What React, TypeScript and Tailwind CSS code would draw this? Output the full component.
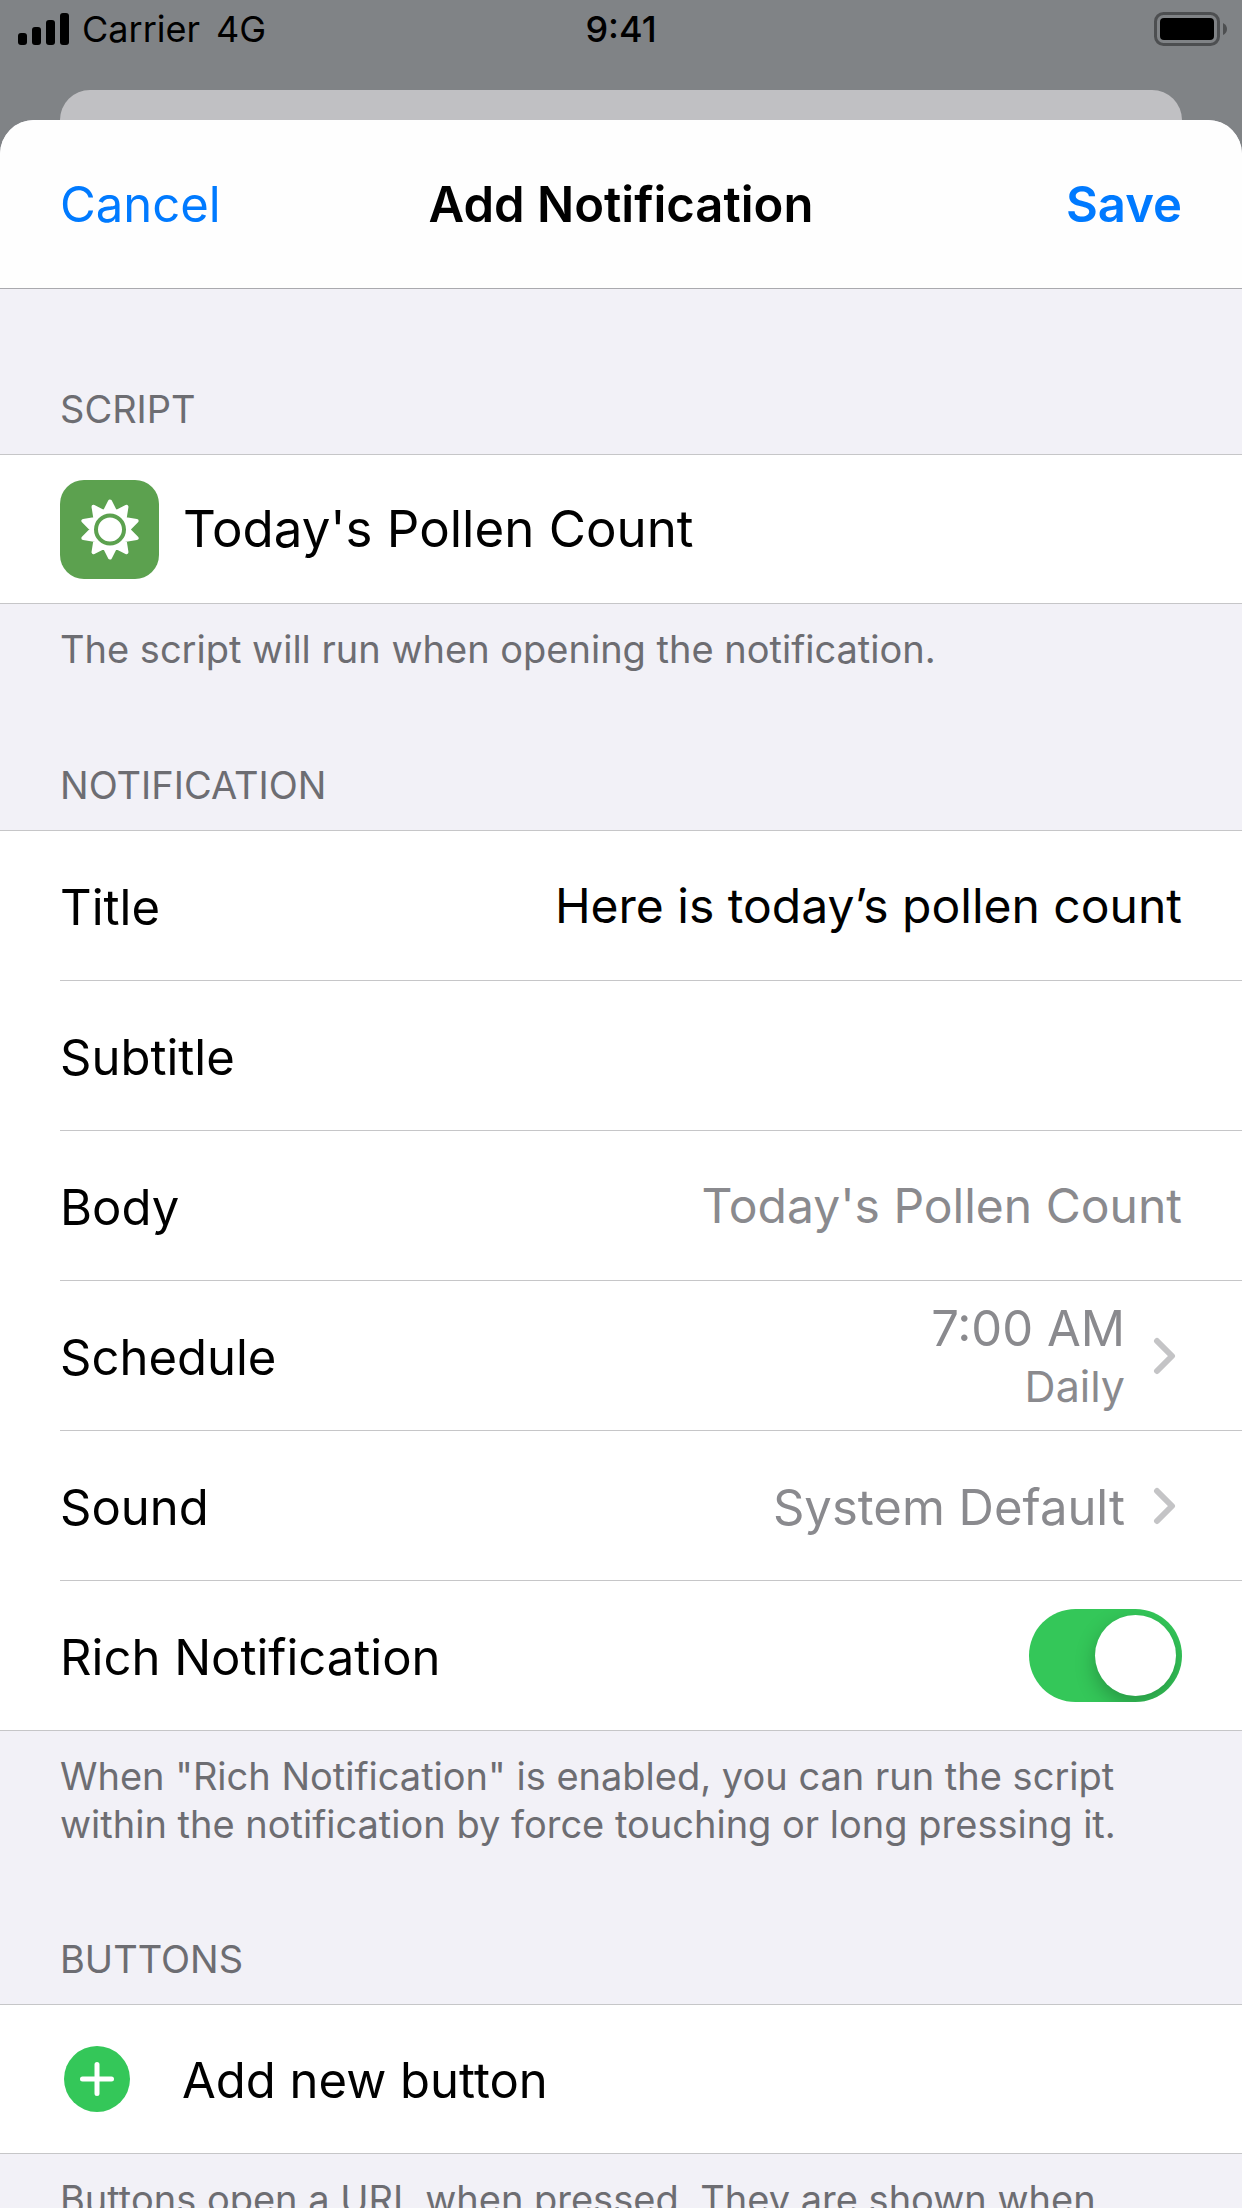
import { useState, type ReactNode } from "react";

const SUN_RAYS = Array.from({ length: 20 }, (_, i) => {
  const radius = i % 2 === 0 ? 28 : 18;
  const angle = (i * Math.PI) / 10 - Math.PI / 2;
  return `${(50 + radius * Math.cos(angle)).toFixed(2)},${(49.5 + radius * Math.sin(angle)).toFixed(2)}`;
}).join(" ");

function StatusBar() {
  return (
    <div className="grid h-[60px] shrink-0 grid-cols-3 items-start px-[18px] pt-[7px] text-[36px] leading-[44px] text-black">
      <div className="flex items-center gap-3">
        <svg className="h-8 w-[52px]" viewBox="0 0 52 32" aria-label="Signal strength">
          <rect x="0" y="20" width="9" height="12" rx="3" />
          <rect x="14" y="14" width="9" height="18" rx="3" />
          <rect x="28" y="7" width="9" height="25" rx="3" />
          <rect x="42" y="0" width="9" height="32" rx="3" />
        </svg>
        <div className="flex gap-4">
          <span>Carrier</span>
          <span>4G</span>
        </div>
      </div>
      <span className="text-center font-medium">9:41</span>
      <svg className="mt-[5px] -mr-1 h-[34px] w-[74px] justify-self-end" viewBox="0 0 74 34" aria-label="Battery full">
        <rect x="1.5" y="1.5" width="63" height="31" rx="8" fill="none" stroke="#4d4f51" strokeWidth="3" />
        <rect x="6" y="6" width="54" height="22" rx="4" />
        <path d="M69 11 Q73 13 73 17 Q73 21 69 23 Z" fill="#4d4f51" />
      </svg>
    </div>
  );
}

function SectionHeader({ children }: { children: ReactNode }) {
  return (
    <h2 className="px-[60px] pb-[21px] text-[38px] leading-[48px] font-normal text-[#6d6d72] uppercase">{children}</h2>
  );
}

function SectionFooter({ children }: { children: ReactNode }) {
  return <p className="px-[60px] pt-[21px] text-[38px] leading-[48px] text-[#6d6d72]">{children}</p>;
}

function Card({ children }: { children: ReactNode }) {
  return <div className="border-y border-[#c6c6c8] bg-white pl-[60px]">{children}</div>;
}

const ROW =
  "flex h-[150px] w-full items-center justify-between gap-6 border-b border-[#c6c6c8] pr-[60px] text-left last:h-[149px] last:border-b-0";

function Field({ id, label, value, placeholder }: { id: string; label: string; value?: string; placeholder?: string }) {
  return (
    <div className={ROW}>
      <label htmlFor={id} className="pt-1">
        {label}
      </label>
      <input
        id={id}
        type="text"
        defaultValue={value}
        placeholder={placeholder}
        className="min-w-0 flex-1 bg-transparent text-right text-[48px] text-black outline-none placeholder:text-[#8a8a8e] placeholder:opacity-100"
      />
    </div>
  );
}

function Chevron() {
  return (
    <svg className="mr-[5px] h-[38px] w-6" viewBox="0 0 24 38" fill="none" aria-hidden="true">
      <path d="M4 4 L19 19 L4 34" stroke="#c4c4c6" strokeWidth="6" strokeLinecap="round" strokeLinejoin="round" />
    </svg>
  );
}

function LinkRow({ label, children }: { label: string; children: ReactNode }) {
  return (
    <button type="button" className={ROW}>
      <span className="pt-1">{label}</span>
      <span className="flex items-center gap-7 text-[#8a8a8e]">
        {children}
        <Chevron />
      </span>
    </button>
  );
}

export default function App() {
  const [rich, setRich] = useState(true);
  return (
    <div className="flex h-screen flex-col overflow-hidden bg-[#808386] font-[Inter,'Liberation_Sans',sans-serif] text-[49px] leading-[60px] text-black">
      <StatusBar />
      <div className="mx-[60px] mt-[30px] h-[30px] shrink-0 rounded-t-[30px] bg-[#c0c0c3]" />
      <main className="flex min-h-0 flex-1 flex-col overflow-hidden rounded-t-[34px] bg-[#f2f1f7]">
        <header className="grid h-[169px] shrink-0 grid-cols-[1fr_auto_1fr] items-center border-b border-[#a9a9ae] bg-[#fefefe] px-[60px] pt-0.5">
          <button type="button" className="justify-self-start text-[#007aff]">
            Cancel
          </button>
          <h1 className="font-semibold">Add Notification</h1>
          <button type="button" className="justify-self-end font-semibold text-[#007aff]">
            Save
          </button>
        </header>

        <div className="min-h-0 flex-1 overflow-y-auto [scrollbar-width:none]">
          <section className="pt-24">
            <SectionHeader>Script</SectionHeader>
            <Card>
              <div className="flex h-[148px] items-center gap-6">
                <svg className="size-[99px]" viewBox="0 0 99 99" aria-hidden="true">
                  <rect width="99" height="99" rx="24" fill="#5ca14f" />
                  <polygon points={SUN_RAYS} fill="#fff" stroke="#fff" strokeWidth="4" strokeLinejoin="round" />
                  <circle cx="50" cy="49.5" r="14" fill="#fff" stroke="#5ca14f" strokeWidth="4" />
                </svg>
                <span className="text-[51px]">Today's Pollen Count</span>
              </div>
            </Card>
            <SectionFooter>The script will run when opening the notification.</SectionFooter>
          </section>

          <section className="pt-[88px]">
            <SectionHeader>Notification</SectionHeader>
            <Card>
              <Field id="title" label="Title" value="Here is today’s pollen count" />
              <Field id="subtitle" label="Subtitle" />
              <Field id="body" label="Body" placeholder="Today's Pollen Count" />
              <LinkRow label="Schedule">
                <span className="flex flex-col text-right">
                  <span>7:00 AM</span>
                  <span className="text-[43px] leading-[54px]">Daily</span>
                </span>
              </LinkRow>
              <LinkRow label="Sound">
                <span className="pt-1">System Default</span>
              </LinkRow>
              <div className={ROW}>
                <label htmlFor="rich" className="pt-1">
                  Rich Notification
                </label>
                <input
                  id="rich"
                  type="checkbox"
                  role="switch"
                  checked={rich}
                  onChange={(e) => setRich(e.target.checked)}
                  className="flex h-[93px] w-[153px] appearance-none items-center overflow-hidden rounded-full bg-[#e9e9ea] px-1.5 before:size-[81px] before:rounded-full before:bg-white before:shadow-[0_8px_20px_rgba(0,0,0,0.25)] checked:justify-end checked:bg-[#34c759]"
                />
              </div>
            </Card>
            <SectionFooter>
              When "Rich Notification" is enabled, you can run the script within the notification by force touching or long
              pressing it.
            </SectionFooter>
          </section>

          <section className="pt-[87px]">
            <SectionHeader>Buttons</SectionHeader>
            <Card>
              <button type="button" className="flex h-[148px] w-full items-center text-left">
                <svg className="mr-[52px] ml-1 size-[66px]" viewBox="0 0 66 66" aria-hidden="true">
                  <circle cx="33" cy="33" r="33" fill="#34c759" />
                  <path d="M33 18.5 V47.5 M18.5 33 H47.5" stroke="#fff" strokeWidth="5" strokeLinecap="round" />
                </svg>
                <span className="pt-1">Add new button</span>
              </button>
            </Card>
            <SectionFooter>Buttons open a URL when pressed. They are shown when</SectionFooter>
          </section>
        </div>
      </main>
    </div>
  );
}
